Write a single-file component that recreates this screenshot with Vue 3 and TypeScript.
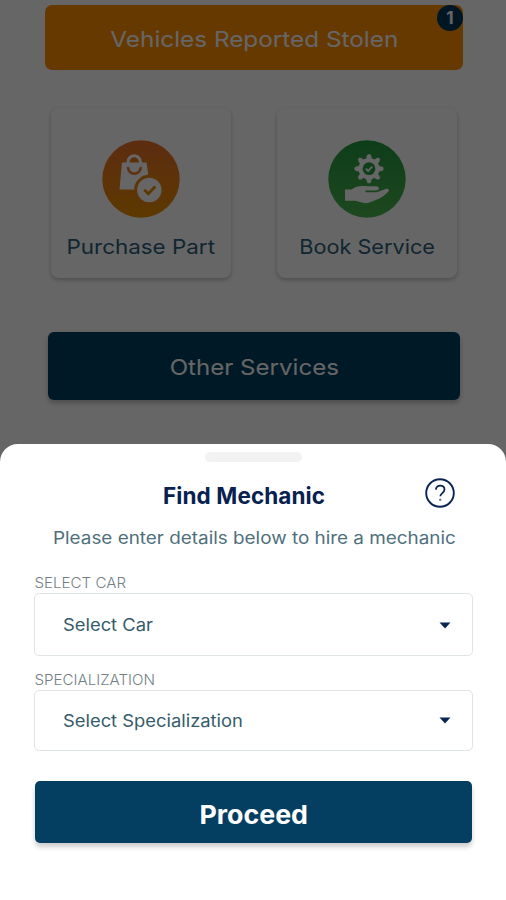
<script setup lang="ts">
interface Field {
  label: string
  placeholder: string
}

const fields: Field[] = [
  { label: 'SELECT CAR', placeholder: 'Select Car' },
  { label: 'SPECIALIZATION', placeholder: 'Select Specialization' },
]
const teeth: number[] = [0, 45, 90, 135, 180, 225, 270, 315]
</script>

<template>
  <div class="screen">
    <main class="home">
      <button class="stolen">
        <span class="stolen-text">Vehicles Reported Stolen</span>
        <span class="badge">1</span>
      </button>
      <div class="cards">
        <section class="card">
          <svg class="icon" viewBox="0 0 78 78">
            <defs>
              <linearGradient id="orange" x1="0" y1="0" x2="0" y2="1">
                <stop offset="0" stop-color="#e8702a" />
                <stop offset="1" stop-color="#e88f00" />
              </linearGradient>
            </defs>
            <circle cx="39" cy="39" r="38.7" fill="url(#orange)" />
            <path d="M20 22.5h24.5l2.3 16L34 49.5H17.5Z" fill="#fff" />
            <path d="M26 24v-2a6.2 6.2 0 0 1 12.4 0V24" fill="none" stroke="#fff" stroke-width="3" />
            <path d="M26 28c1.5 7.5 11.2 7.5 12.7 0" fill="none" stroke="#e87a1c" stroke-width="2.5" stroke-linecap="round" />
            <circle cx="47.3" cy="50" r="13.7" fill="#fff" stroke="#e88412" stroke-width="3" />
            <path d="m42.3 49.8 4 4 7-7.3" fill="none" stroke="#e88908" stroke-width="2.7" />
          </svg>
          <span class="card-text purchase">Purchase Part</span>
        </section>
        <section class="card">
          <svg class="icon" viewBox="0 0 78 78">
            <defs>
              <linearGradient id="green" x1="0" y1="0" x2="0" y2="1">
                <stop offset="0" stop-color="#239941" />
                <stop offset="1" stop-color="#4bb54e" />
              </linearGradient>
            </defs>
            <circle cx="39" cy="39" r="38.7" fill="url(#green)" />
            <g fill="#fff">
              <circle cx="41" cy="28.7" r="10.6" />
              <path
                v-for="angle in teeth"
                :key="angle"
                d="M38.5 20v-3.4l1.3-2.4h2.4l1.3 2.4V20Z"
                :transform="`rotate(${angle} 41 28.7)`"
              />
              <path d="M17 49.5h6.5c4.5-3.5 9-4.2 16-3.2h8.5c4 0 4 4.2 0 4.2H37.5v1.8h11.2l8.8-3.4c2.4-.8 4.5.8 2.7 2.8-4.5 5-9.5 7.4-15.7 9.6-5 2.2-8 2.4-12.5.8l-4.5-1.4H17Z" />
            </g>
            <circle cx="41" cy="28.7" r="6.4" fill="#2a9c43" />
            <path d="m37.8 28.7 2.3 2.3 4.2-4.5" fill="none" stroke="#fff" stroke-width="1.8" />
          </svg>
          <span class="card-text book">Book Service</span>
        </section>
      </div>
      <button class="other"><span class="other-text">Other Services</span></button>
    </main>
    <div class="scrim"></div>
    <section class="sheet">
      <div class="handle"></div>
      <header class="heading">
        <h1>Find Mechanic</h1>
        <svg class="help" viewBox="0 0 30 30" fill="none" stroke="#092452">
          <circle cx="15" cy="15" r="13.8" stroke-width="1.9" />
          <path d="M10.9 11.6c.3-2.6 2.1-3.9 4.3-3.9 2.5 0 4.3 1.6 4.3 3.9 0 3.5-4.2 3.5-4.2 6.7" stroke-width="1.8" />
          <circle cx="15.2" cy="21.8" r="1.2" fill="#687991" stroke="none" />
        </svg>
      </header>
      <p class="intro">Please enter details below to hire a mechanic</p>
      <div class="form">
        <div v-for="field in fields" :key="field.label" class="field">
          <span class="label"><span class="label-text">{{ field.label }}</span></span>
          <div class="select">
            <span class="placeholder">{{ field.placeholder }}</span>
            <svg class="caret" viewBox="0 0 12 7"><path d="M.5.5h11L6 6.5Z" fill="#082653" /></svg>
          </div>
        </div>
      </div>
      <button class="proceed"><span class="proceed-text">Proceed</span></button>
    </section>
  </div>
</template>

<style>
body {
  margin: 0;
}
</style>

<style scoped>
* {
  box-sizing: border-box;
}
.screen {
  position: relative;
  width: 506px;
  height: 900px;
  overflow: hidden;
  background: #fff;
  font-family: Inter, "Liberation Sans", sans-serif;
  white-space: nowrap;
}
button {
  border: 0;
  padding: 0;
  font-family: inherit;
  display: flex;
  align-items: center;
  justify-content: center;
}
.home {
  height: 444px;
  padding-top: 5px;
}
.stolen {
  position: relative;
  width: 418px;
  height: 65px;
  padding-top: 3px;
  margin-left: 45px;
  border-radius: 7px;
  background: #ff8f00;
  color: #fff;
  font-size: 22px;
}
.stolen-text {
  transform: scaleX(1.105);
}
.badge {
  position: absolute;
  right: 0;
  top: 0;
  width: 26px;
  height: 26px;
  border-radius: 50%;
  background: #00375e;
  font-size: 17px;
  font-weight: 700;
  line-height: 27px;
}
.cards {
  display: flex;
  gap: 46px;
  margin: 38px 0 0 51px;
}
.card {
  width: 180px;
  height: 170px;
  padding-top: 32px;
  border-radius: 8px;
  background: #fff;
  box-shadow: 0 2px 4px rgba(0, 0, 0, 0.25);
  display: flex;
  flex-direction: column;
  align-items: center;
}
.icon {
  width: 78px;
  height: 78px;
}
.card-text {
  margin-top: 16px;
  line-height: 26px;
  font-size: 20px;
  color: #2c5f78;
}
.purchase {
  transform: translateX(-0.5px) scaleX(1.12);
}
.book {
  transform: translateX(0.5px) scaleX(1.085);
}
.other {
  width: 412px;
  height: 68px;
  padding-top: 1px;
  margin: 54px 0 0 48px;
  border-radius: 6px;
  background: #003f62;
  color: #fff;
  font-size: 22px;
  box-shadow: 0 3px 5px rgba(0, 0, 0, 0.25);
}
.other-text {
  transform: scaleX(1.095);
}
.scrim {
  position: absolute;
  inset: 0;
  background: rgba(0, 0, 0, 0.6);
}
.sheet {
  position: relative;
  height: 456px;
  padding: 8px 33px 0 34px;
  border-radius: 18px 18px 0 0;
  background: #fff;
}
.handle {
  width: 97px;
  height: 10px;
  margin-left: 171px;
  border-radius: 5px;
  background: #f2f2f2;
}
.heading {
  display: flex;
  justify-content: space-between;
  align-items: center;
  height: 32px;
  margin: 15px 18px 0 129px;
}
h1 {
  margin: 4px 0 0;
  font-size: 22.5px;
  font-weight: 700;
  letter-spacing: 0.1px;
  color: #08214f;
}
.help {
  width: 30px;
  height: 30px;
}
.intro {
  margin: 17px 0 0 19px;
  line-height: 24px;
  font-size: 17px;
  color: #4f6f7c;
  transform: scaleX(1.11);
  transform-origin: left;
}
.form {
  display: flex;
  flex-direction: column;
  gap: 13px;
  margin-top: 22px;
}
.label {
  display: block;
  height: 21px;
  line-height: 21px;
  font-size: 14px;
  font-weight: 300;
  color: #747f85;
}
.label-text {
  display: inline-block;
  transform: translateX(0.5px) scaleX(1.08);
  transform-origin: left;
}
.select {
  display: flex;
  justify-content: space-between;
  align-items: center;
  height: 61px;
  padding: 0 21px 0 28px;
  border: 1px solid #dfe4e6;
  border-radius: 5px;
}
.field:first-child .select {
  height: 63px;
  padding-top: 1px;
}
.placeholder {
  font-size: 17px;
  color: #365b6a;
  transform: scaleX(1.08);
  transform-origin: left;
}
.caret {
  width: 12px;
  height: 7px;
}
.proceed {
  width: 437px;
  height: 62px;
  margin: 30px 0 0 1px;
  border-radius: 5px;
  background: #043f62;
  color: #fff;
  font-size: 26px;
  font-weight: 700;
  padding-top: 4px;
  box-shadow: 0 4px 5px rgba(0, 0, 0, 0.2);
}
.proceed-text {
  transform: scaleX(1.03);
}
</style>
